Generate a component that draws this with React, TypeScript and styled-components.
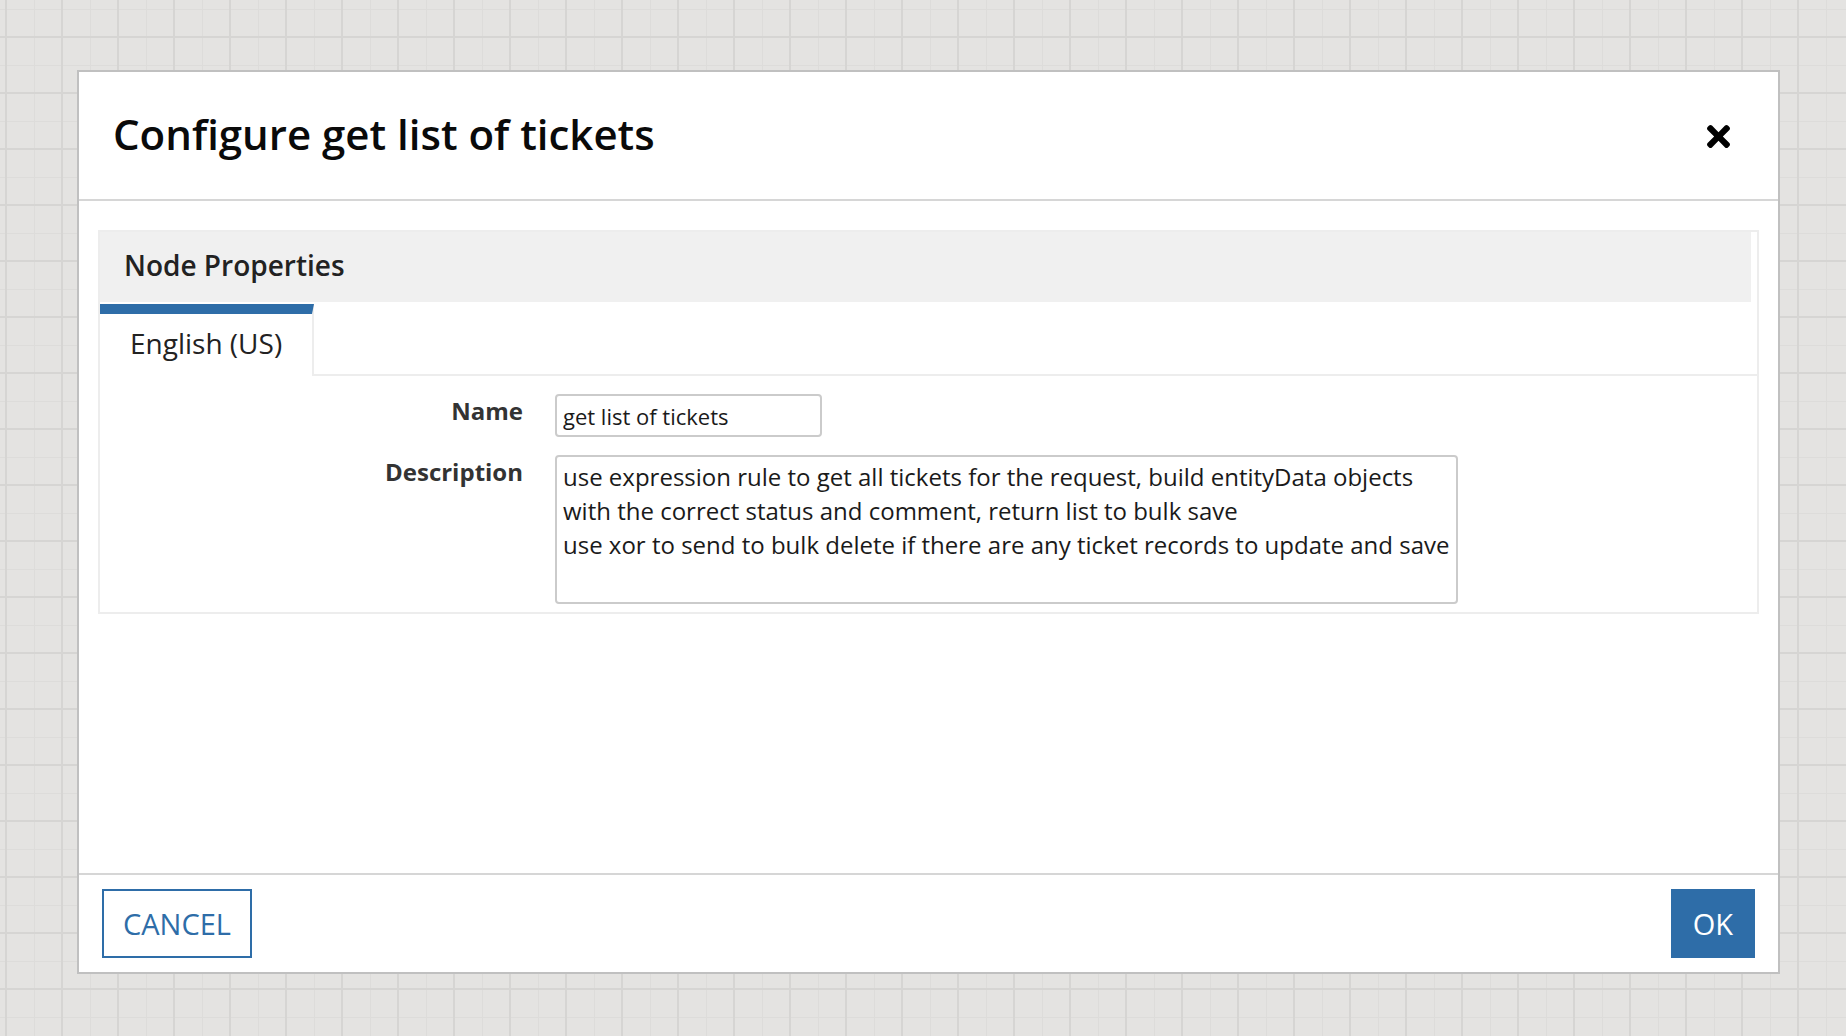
import React, { FC } from "react";
import styled, { createGlobalStyle } from "styled-components";

const GlobalStyle = createGlobalStyle`
  html, body {
    margin: 0;
    padding: 0;
  }

  body {
    font-family: "Open Sans", "Noto Sans", sans-serif;
    background-color: #e4e3e1;
    background-image:
      linear-gradient(to right, #d6d5d3 2px, transparent 2px),
      linear-gradient(to bottom, #d6d5d3 2px, transparent 2px),
      linear-gradient(to right, #dddcda 1px, transparent 1px),
      linear-gradient(to bottom, #dddcda 1px, transparent 1px);
    background-size: 56px 56px, 56px 56px, 28px 28px, 28px 28px;
    background-position: 5px 0, 0 36px, 6px 0, 0 9px;
  }
`;

const Page = styled.div`
  box-sizing: border-box;
  min-height: 100vh;
  padding: 70px 0 0 77px;
`;

const Modal = styled.div`
  box-sizing: border-box;
  display: flex;
  flex-direction: column;
  width: 1703px;
  height: 904px;
  background: #fff;
  border: 2px solid #c0c0c0;
`;

const Header = styled.div`
  display: flex;
  align-items: center;
  justify-content: space-between;
  height: 127px;
  padding: 0 48px 0 34px;
  border-bottom: 2px solid #d6d6d6;

  h1 {
    margin: 0 0 4px 0;
    font-size: 42px;
    font-weight: 600;
    color: #0a0a0a;
  }
`;

const CloseButton = styled.button`
  display: flex;
  align-items: center;
  justify-content: center;
  padding: 0;
  margin-top: 2px;
  border: none;
  background: none;
  cursor: pointer;
`;

const Body = styled.div`
  flex: 1;
  padding: 29px 19px 0 19px;
`;

const Panel = styled.section`
  border: 2px solid #ededed;
`;

const PanelTitle = styled.div`
  display: flex;
  align-items: center;
  box-sizing: border-box;
  height: 70px;
  margin-right: 6px;
  padding: 0 0 4px 24px;
  background: #f0f0f0;
  font-size: 28px;
  font-weight: 600;
  color: #222;
`;

const Tabs = styled.div`
  display: flex;
  margin-top: 2px;
`;

const Tab = styled.div<{ $active?: boolean }>`
  padding: 10px 30px 14px 30px;
  border-top: 10px solid ${(p) => (p.$active ? "#2e6da8" : "transparent")};
  border-right: 2px solid #ededed;
  font-size: 28px;
  color: #222;
`;

const TabFiller = styled.div`
  flex: 1;
  border-bottom: 2px solid #ededed;
`;

const Form = styled.div`
  display: grid;
  grid-template-columns: 423px 1fr;
  column-gap: 32px;
  row-gap: 18px;
  padding: 18px 0 8px 0;
`;

const Label = styled.label`
  align-self: start;
  text-align: right;
  font-size: 24px;
  font-weight: 700;
  color: #333;
`;

const TextInput = styled.input`
  display: block;
  box-sizing: border-box;
  width: 267px;
  height: 43px;
  padding: 0 6px;
  border: 2px solid #cbcbcb;
  border-radius: 4px;
  font-family: "Open Sans", sans-serif;
  font-size: 22px;
  color: #1a1a1a;
  outline: none;
`;

const TextArea = styled.textarea`
  display: block;
  box-sizing: border-box;
  width: 903px;
  height: 149px;
  padding: 3px 6px;
  border: 2px solid #cbcbcb;
  border-radius: 4px;
  font-family: "Open Sans", sans-serif;
  font-size: 24px;
  line-height: 34px;
  color: #1a1a1a;
  white-space: pre;
  overflow: hidden;
  resize: none;
  outline: none;
`;

const Footer = styled.div`
  display: flex;
  align-items: center;
  justify-content: space-between;
  height: 97px;
  padding: 0 23px;
  border-top: 2px solid #d6d6d6;
`;

const Button = styled.button<{ $primary?: boolean }>`
  box-sizing: border-box;
  height: 69px;
  padding: 0 ${(p) => (p.$primary ? "20px" : "19px")};
  border: 2px solid #2e6da8;
  background: ${(p) => (p.$primary ? "#2e6da8" : "#fff")};
  color: ${(p) => (p.$primary ? "#fff" : "#2e6da8")};
  font-family: "Open Sans", sans-serif;
  font-size: 29px;
  cursor: pointer;
`;

const CloseIcon: FC = () => (
  <svg width="23" height="23" viewBox="0 80 352 352" aria-hidden="true">
    <path
      fill="#000"
      d="M242.72 256l100.07-100.07c12.28-12.28 12.28-32.19 0-44.48l-22.24-22.24c-12.28-12.28-32.19-12.28-44.48 0L176 189.28 75.93 89.21c-12.28-12.28-32.19-12.28-44.48 0L9.21 111.45c-12.28 12.28-12.28 32.19 0 44.48L109.28 256 9.21 356.07c-12.28 12.28-12.28 32.19 0 44.48l22.24 22.24c12.28 12.28 32.2 12.28 44.48 0L176 322.72l100.07 100.07c12.28 12.28 32.2 12.28 44.48 0l22.24-22.24c12.28-12.28 12.28-32.19 0-44.48L242.72 256z"
    />
  </svg>
);

const description = [
  "use expression rule to get all tickets for the request, build entityData objects",
  "with the correct status and comment, return list to bulk save",
  "use xor to send to bulk delete if there are any ticket records to update and save",
].join("\n");

const App: FC = () => {
  return (
    <>
      <GlobalStyle />
      <Page>
        <Modal>
          <Header>
            <h1>Configure get list of tickets</h1>
            <CloseButton aria-label="Close">
              <CloseIcon />
            </CloseButton>
          </Header>
          <Body>
            <Panel>
              <PanelTitle>Node Properties</PanelTitle>
              <Tabs>
                <Tab $active>English (US)</Tab>
                <TabFiller />
              </Tabs>
              <Form>
                <Label htmlFor="node-name">Name</Label>
                <TextInput id="node-name" defaultValue="get list of tickets" />
                <Label htmlFor="node-description">Description</Label>
                <TextArea id="node-description" defaultValue={description} />
              </Form>
            </Panel>
          </Body>
          <Footer>
            <Button>CANCEL</Button>
            <Button $primary>OK</Button>
          </Footer>
        </Modal>
      </Page>
    </>
  );
};

export default App;
